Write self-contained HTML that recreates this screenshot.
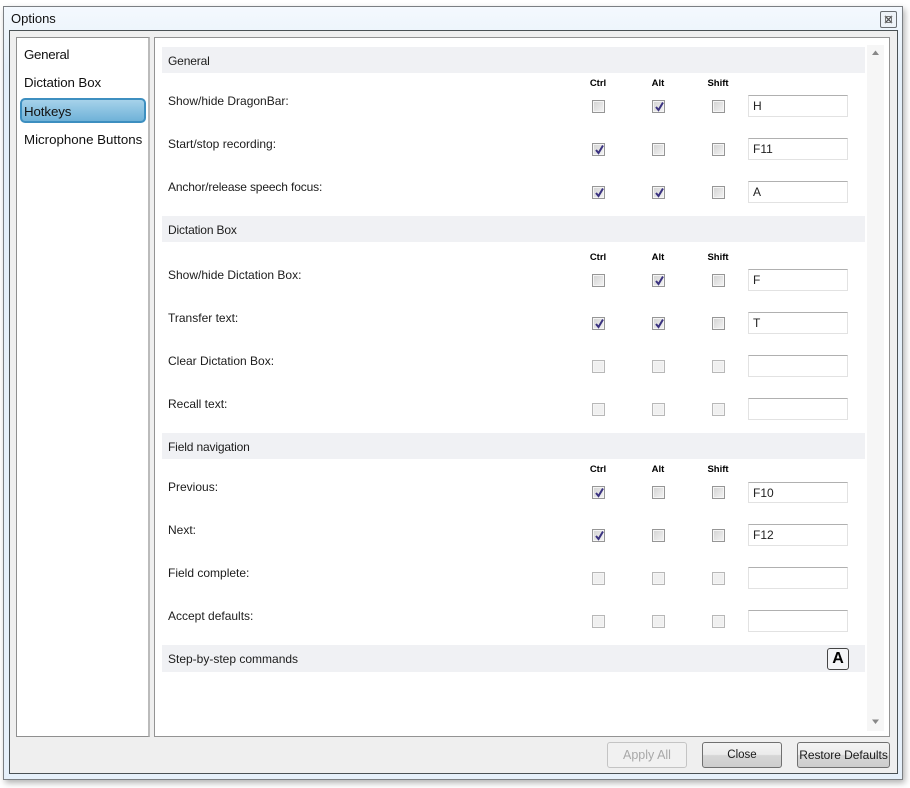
<!DOCTYPE html>
<html><head><meta charset="utf-8"><title>Options</title>
<style>
html,body{margin:0;padding:0;background:#fff}
body{width:910px;height:788px;position:relative;overflow:hidden;font-family:"Liberation Sans",sans-serif;color:#1c1c1c}
div,span{position:absolute;box-sizing:border-box}
.t{font-size:12px;line-height:16px;white-space:nowrap}
.s{letter-spacing:-.15px}
.nav{font-size:13.3px;line-height:18px;left:24px;white-space:nowrap;color:#111}
.sec{left:162px;width:703px;height:26px;background:#f0f1f4}
.h{font-size:9.5px;font-weight:bold;line-height:12px;width:50px;text-align:center;color:#000}
.c{width:13px;height:13px;border:1px solid #969696;background:linear-gradient(135deg,#d2d2d2,#f4f4f4);box-shadow:inset 0 0 0 1px #f5f5f5}
.c svg{position:absolute;left:1px;top:0}
.d{border-color:#b8b8b8;background:#f0f0f0}
.i{left:748px;width:100px;height:22px;border:1px solid #e2e2e2;border-top-color:#b0b0b0;background:#fff;font-size:12px;line-height:21px;padding-left:4px;color:#222}
.b{height:26px;border:1px solid #707070;border-radius:3px;background:linear-gradient(#f3f3f3 0,#ebebeb 48%,#d6d6d6 52%,#cdcdcd 100%);font-size:12px;line-height:24px;text-align:center;color:#1a1a1a;top:742px;white-space:nowrap}
</style></head>
<body>
<!-- window -->
<div style="left:3px;top:6px;width:900px;height:774px;border:1px solid #7b7f83;background:linear-gradient(#f4f9fe,#e4eff9 60px,#e6f0fa);box-shadow:2px 3px 6px rgba(0,0,0,.3)"></div>
<div style="left:9px;top:30px;width:889px;height:744px;border:1px solid #4a5154;background:#efefef"></div>
<div class="t" style="left:11px;top:11px;font-size:13px;color:#111">Options</div>
<div style="left:880px;top:11px;width:17px;height:17px;border:1px solid #6a6e72;border-radius:2px;background:#eef3f8"></div>
<svg style="position:absolute;left:884px;top:15px" width="9" height="9" viewBox="0 0 9 9"><path d="M1 1L8 8M8 1L1 8" stroke="#555" stroke-width="1.3"/><rect x="1.500" y="1.500" width="6" height="6" fill="none" stroke="#777"/></svg>

<!-- left panel -->
<div style="left:16px;top:37px;width:134px;height:700px;background:#fff;border:1px solid #8f8f8f;border-right:2px solid #bbb"></div>
<div class="nav" style="top:46px;letter-spacing:-.3px">General</div>
<div class="nav" style="top:74px;letter-spacing:-.1px">Dictation Box</div>
<div style="left:20px;top:98px;width:126px;height:25px;border:2px solid #3d8fc0;border-radius:5px;background:linear-gradient(#a6d2ea,#6fb2d8)"></div>
<div class="nav" style="top:103px;letter-spacing:-.1px">Hotkeys</div>
<div class="nav" style="top:131px">Microphone Buttons</div>

<!-- right panel -->
<div style="left:154px;top:37px;width:736px;height:700px;background:#fff;border:1px solid #939393"></div>
<div style="left:867px;top:45px;width:17px;height:686px;background:#f6f6f6"></div>
<svg style="position:absolute;left:871px;top:50px" width="9" height="6"><path d="M4.500 0.500L8 5H1Z" fill="#888"/></svg>
<svg style="position:absolute;left:871px;top:719px" width="9" height="6"><path d="M1 0.500H8L4.500 5Z" fill="#888"/></svg>

<!-- General -->
<div class="sec" style="top:47px"></div><div class="t s" style="left:168px;top:53px">General</div>
<div class="h" style="left:573px;top:78px">Ctrl</div><div class="h" style="left:633px;top:78px">Alt</div><div class="h" style="left:693px;top:78px">Shift</div>

<div class="t" style="left:168px;top:93px">Show/hide DragonBar:</div>
<div class="c" style="left:592px;top:100px"></div>
<div class="c" style="left:652px;top:100px"><svg width="11" height="11" viewBox="0 0 11 11"><path d="M2 6L4.500 9L9 1.500" fill="none" stroke="#3b3380" stroke-width="2"/></svg></div>
<div class="c" style="left:712px;top:100px"></div>
<div class="i" style="top:95px">H</div>

<div class="t" style="left:168px;top:136px">Start/stop recording:</div>
<div class="c" style="left:592px;top:143px"><svg width="11" height="11" viewBox="0 0 11 11"><path d="M2 6L4.500 9L9 1.500" fill="none" stroke="#3b3380" stroke-width="2"/></svg></div>
<div class="c" style="left:652px;top:143px"></div>
<div class="c" style="left:712px;top:143px"></div>
<div class="i" style="top:138px">F11</div>

<div class="t" style="left:168px;top:179px;letter-spacing:-.14px">Anchor/release speech focus:</div>
<div class="c" style="left:592px;top:186px"><svg width="11" height="11" viewBox="0 0 11 11"><path d="M2 6L4.500 9L9 1.500" fill="none" stroke="#3b3380" stroke-width="2"/></svg></div>
<div class="c" style="left:652px;top:186px"><svg width="11" height="11" viewBox="0 0 11 11"><path d="M2 6L4.500 9L9 1.500" fill="none" stroke="#3b3380" stroke-width="2"/></svg></div>
<div class="c" style="left:712px;top:186px"></div>
<div class="i" style="top:181px">A</div>

<!-- Dictation Box -->
<div class="sec" style="top:216px"></div><div class="t s" style="left:168px;top:222px">Dictation Box</div>
<div class="h" style="left:573px;top:252px">Ctrl</div><div class="h" style="left:633px;top:252px">Alt</div><div class="h" style="left:693px;top:252px">Shift</div>

<div class="t" style="left:168px;top:267px">Show/hide Dictation Box:</div>
<div class="c" style="left:592px;top:274px"></div>
<div class="c" style="left:652px;top:274px"><svg width="11" height="11" viewBox="0 0 11 11"><path d="M2 6L4.500 9L9 1.500" fill="none" stroke="#3b3380" stroke-width="2"/></svg></div>
<div class="c" style="left:712px;top:274px"></div>
<div class="i" style="top:269px">F</div>

<div class="t" style="left:168px;top:310px">Transfer text:</div>
<div class="c" style="left:592px;top:317px"><svg width="11" height="11" viewBox="0 0 11 11"><path d="M2 6L4.500 9L9 1.500" fill="none" stroke="#3b3380" stroke-width="2"/></svg></div>
<div class="c" style="left:652px;top:317px"><svg width="11" height="11" viewBox="0 0 11 11"><path d="M2 6L4.500 9L9 1.500" fill="none" stroke="#3b3380" stroke-width="2"/></svg></div>
<div class="c" style="left:712px;top:317px"></div>
<div class="i" style="top:312px">T</div>

<div class="t" style="left:168px;top:353px">Clear Dictation Box:</div>
<div class="c d" style="left:592px;top:360px"></div>
<div class="c d" style="left:652px;top:360px"></div>
<div class="c d" style="left:712px;top:360px"></div>
<div class="i" style="top:355px"></div>

<div class="t" style="left:168px;top:396px">Recall text:</div>
<div class="c d" style="left:592px;top:403px"></div>
<div class="c d" style="left:652px;top:403px"></div>
<div class="c d" style="left:712px;top:403px"></div>
<div class="i" style="top:398px"></div>

<!-- Field navigation -->
<div class="sec" style="top:433px"></div><div class="t s" style="left:168px;top:439px">Field navigation</div>
<div class="h" style="left:573px;top:464px">Ctrl</div><div class="h" style="left:633px;top:464px">Alt</div><div class="h" style="left:693px;top:464px">Shift</div>

<div class="t" style="left:168px;top:479px">Previous:</div>
<div class="c" style="left:592px;top:486px"><svg width="11" height="11" viewBox="0 0 11 11"><path d="M2 6L4.500 9L9 1.500" fill="none" stroke="#3b3380" stroke-width="2"/></svg></div>
<div class="c" style="left:652px;top:486px"></div>
<div class="c" style="left:712px;top:486px"></div>
<div class="i" style="top:482px;height:21px;line-height:20px">F10</div>

<div class="t" style="left:168px;top:522px">Next:</div>
<div class="c" style="left:592px;top:529px"><svg width="11" height="11" viewBox="0 0 11 11"><path d="M2 6L4.500 9L9 1.500" fill="none" stroke="#3b3380" stroke-width="2"/></svg></div>
<div class="c" style="left:652px;top:529px"></div>
<div class="c" style="left:712px;top:529px"></div>
<div class="i" style="top:524px">F12</div>

<div class="t" style="left:168px;top:565px">Field complete:</div>
<div class="c d" style="left:592px;top:572px"></div>
<div class="c d" style="left:652px;top:572px"></div>
<div class="c d" style="left:712px;top:572px"></div>
<div class="i" style="top:567px"></div>

<div class="t" style="left:168px;top:608px">Accept defaults:</div>
<div class="c d" style="left:592px;top:615px"></div>
<div class="c d" style="left:652px;top:615px"></div>
<div class="c d" style="left:712px;top:615px"></div>
<div class="i" style="top:610px"></div>

<!-- Step-by-step -->
<div class="sec" style="top:645px;height:27px"></div><div class="t" style="left:168px;top:651px">Step-by-step commands</div>
<div style="left:827px;top:648px;width:22px;height:22px;border:1px solid #444;border-radius:3px;background:#f4f5f7;font-size:16px;font-weight:bold;line-height:20px;text-align:center;color:#000">A</div>

<!-- buttons -->
<div class="b" style="left:607px;width:80px;border-color:#c4c4c4;background:#f1f1f1;color:#a8a8a8;font-size:12.5px">Apply All</div>
<div class="b" style="left:702px;width:80px;font-size:11.5px">Close</div>
<div class="b" style="left:797px;width:93px;letter-spacing:-.05px">Restore Defaults</div>
</body></html>
